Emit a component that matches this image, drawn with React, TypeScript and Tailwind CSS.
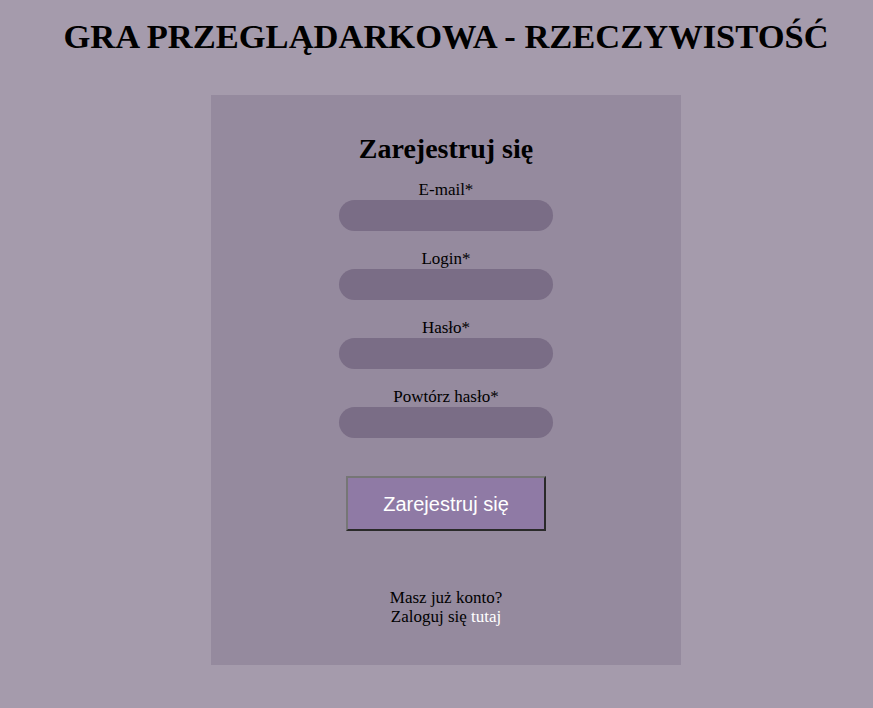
import React from 'react';

const serif = { fontFamily: '"Liberation Serif", "DejaVu Serif", serif' };

const Field: React.FC<{ label: string; type?: string }> = ({ label, type = 'text' }) => (
  <div className="flex flex-col items-center">
    <label className="text-[17px] leading-[19px] text-black">{label}</label>
    <input
      type={type}
      className="mt-[1px] h-[31px] w-[214px] rounded-full bg-[#7a6d86] px-4 outline-none"
    />
  </div>
);

export default function App() {
  return (
    <div className="min-h-[708px] bg-[#a59bac] pl-[19px]" style={serif}>
      <h1 className="pt-[16px] text-center text-[34.5px] font-bold leading-[40px] text-black">
        GRA PRZEGLĄDARKOWA - RZECZYWISTOŚĆ
      </h1>
      <div className="mx-auto mt-[39px] flex h-[570px] w-[470px] flex-col items-center bg-[#958a9e] pt-[39px]">
        <h2 className="text-[28px] font-bold leading-[30px] text-black">Zarejestruj się</h2>
        <div className="mt-[16px] flex flex-col gap-[18px]">
          <Field label="E-mail*" />
          <Field label="Login*" />
          <Field label="Hasło*" type="password" />
          <Field label="Powtórz hasło*" type="password" />
        </div>
        <button
          className="mt-[38px] h-[55px] w-[200px] border-2 border-t-[#767676] border-l-[#767676] border-r-[#2a2a2a] border-b-[#2a2a2a] bg-[#8f7aa5] text-[20px] text-white"
          style={{ fontFamily: '"Liberation Sans", Arial, sans-serif' }}
        >
          Zarejestruj się
        </button>
        <div className="mt-[57px] text-center text-[17px] leading-[19px] text-black">
          <p>Masz już konto?</p>
          <p>
            Zaloguj się <a className="text-white">tutaj</a>
          </p>
        </div>
      </div>
    </div>
  );
}
